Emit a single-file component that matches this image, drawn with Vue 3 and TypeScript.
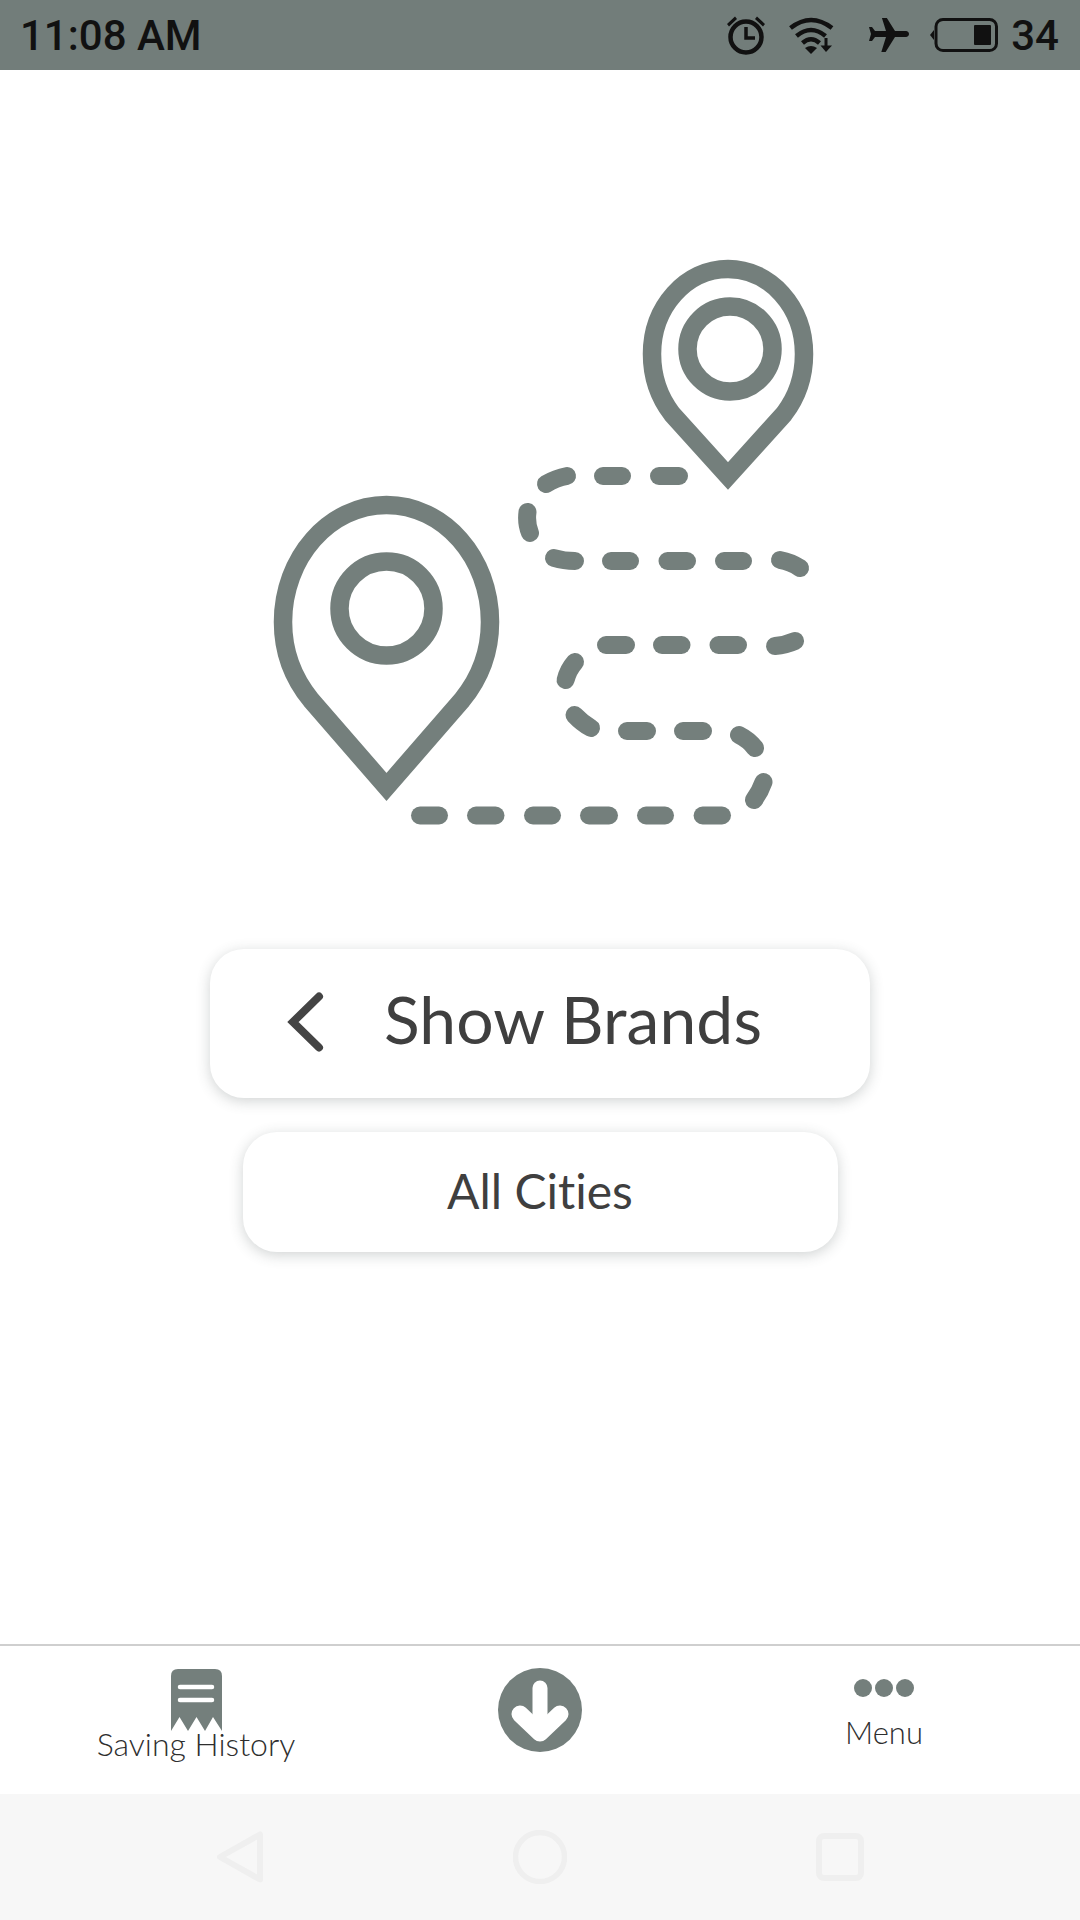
<script setup lang="ts">
const dashes: string[] = [
  'M603 476H622',
  'M659 476H679',
  'M546 484Q556 478 567 476',
  'M527.5 512Q526 523 530 533',
  'M554 558Q564 561 575 561',
  'M611 561H630',
  'M667.5 561H687',
  'M724 561H743',
  'M780 560Q791 562 800 568',
  'M606 645H626',
  'M662 645H681.5',
  'M718.5 645H738',
  'M775 646Q786 645 795 641',
  'M575 662Q568 670 565.6 680',
  'M574.5 715Q582 723 591 728',
  'M627 731H647',
  'M683 731H703',
  'M739 735Q749 740 755 748',
  'M763.5 782Q760 792 754 800',
  'M420 815.5H439',
  'M476 815.5H495.5',
  'M533 815.5H552',
  'M589 815.5H609',
  'M646 815.5H665',
  'M702.6 815.5H722',
]
</script>

<template>
  <div class="screen">
    <header class="status-bar">
      <span class="clock">11:08 AM</span>
      <div class="status-icons">
        <svg class="ic-alarm" width="40" height="40" viewBox="0 0 40 40">
          <circle cx="20" cy="22" r="15.500" fill="none" stroke="#111" stroke-width="4.500" />
          <path d="M20 12V23H29" fill="none" stroke="#111" stroke-width="3.500" />
          <path d="M1 9L9 1.500L11 4L3 11.500Z M39 9L31 1.500L29 4L37 11.500Z" fill="#111" />
        </svg>
        <svg class="ic-wifi" width="46" height="37" viewBox="0 0 46 37">
          <g fill="none" stroke="#111" stroke-width="4.500">
            <path d="M1.500 11Q22 -5 43 11" />
            <path d="M7.500 19Q22 7 36.500 19" />
            <path d="M13.500 26Q22 18.500 30.500 26" />
          </g>
          <path d="M16 31Q22 27 28 31L22 37Z" fill="#111" />
          <path d="M37 21V32" stroke="#111" stroke-width="3" />
          <path d="M31.500 28.500H43L37 35Z" fill="#111" />
        </svg>
        <svg class="ic-plane" width="40" height="34" viewBox="2 2 20 17" preserveAspectRatio="none">
          <path
            transform="rotate(90 12 10.500) translate(0 -1.500)"
            d="M21 16v-2l-8-5V3.500c0-.83-.67-1.500-1.500-1.500S10 2.670 10 3.500V9l-8 5v2l8-2.500V19l-2 1.500V22l3.500-1 3.500 1v-1.500L13 19v-5.500l8 2.500z"
            fill="#111"
          />
        </svg>
        <svg class="ic-batt" width="68" height="34" viewBox="0 0 68 34">
          <rect x="6" y="1.500" width="60.500" height="31" rx="7" fill="none" stroke="#111" stroke-width="3" />
          <path d="M4 12V22L0 17Z" fill="#111" />
          <rect x="44" y="7" width="17" height="20" rx="1" fill="#111" />
        </svg>
        <span class="level">34</span>
      </div>
    </header>

    <main class="content">
      <svg class="route" width="560" height="575" viewBox="260 255 560 575">
        <g fill="none" stroke="#747f7c" stroke-width="18.500">
          <path
            stroke-miterlimit="6"
            d="M386.500 787L311 700C293 678 283 652 283 622C283 558 329 505 386.500 505C444 505 490 558 490 622C490 652 480 678 462 700Z"
          />
          <circle cx="386.500" cy="608.500" r="47" />
          <path
            stroke-miterlimit="6"
            d="M728 476L672 414C659 397 652 376 652 354C652 307 686 269 728 269C770 269 804 307 804 354C804 376 797 397 784 414Z"
          />
          <circle cx="730" cy="349" r="42.500" />
        </g>
        <g fill="none" stroke="#747f7c" stroke-width="18" stroke-linecap="round">
          <path v-for="d in dashes" :key="d" :d="d" />
        </g>
      </svg>

      <button class="btn btn-brands" type="button">
        <svg class="chevron" width="40" height="64" viewBox="0 0 40 64">
          <path d="M33 4.500L7 30L33 55.500" fill="none" stroke="#444" stroke-width="8" stroke-linecap="round" stroke-linejoin="miter" />
        </svg>
        <span class="btn-text">Show Brands</span>
      </button>
      <button class="btn btn-cities" type="button"><span class="btn-text">All Cities</span></button>
    </main>

    <nav class="tabs">
      <div class="tab tab-history">
        <svg width="51" height="62" viewBox="0 0 51 62">
          <path d="M0 7Q0 0 7 0H44Q51 0 51 7V62L42 48L34 62L25.500 48L17 62L8.500 48L0 62Z" fill="#747f7c" />
          <path d="M9 18H41M9 31H41" stroke="#fff" stroke-width="4.500" stroke-linecap="round" />
        </svg>
        <span class="tab-label">Saving History</span>
      </div>
      <div class="tab tab-download">
        <svg width="84" height="84" viewBox="0 0 84 84">
          <circle cx="42" cy="42" r="42" fill="#747f7c" />
          <path d="M42 20V60" fill="none" stroke="#fff" stroke-width="15" stroke-linecap="round" />
          <path d="M22 46L42 65L62 46" fill="none" stroke="#fff" stroke-width="17" stroke-linecap="round" stroke-linejoin="round" />
        </svg>
      </div>
      <div class="tab tab-menu">
        <div class="dots"><i></i><i></i><i></i></div>
        <span class="tab-label">Menu</span>
      </div>
    </nav>

    <footer class="sys-nav">
      <svg width="46" height="52" viewBox="0 0 46 52">
        <path d="M43 3.500V48.500L3 26Z" fill="none" stroke="#efefef" stroke-width="6" stroke-linejoin="round" />
      </svg>
      <svg width="54" height="54" viewBox="0 0 54 54">
        <circle cx="27" cy="27" r="24.500" fill="none" stroke="#efefef" stroke-width="5.500" />
      </svg>
      <svg width="48" height="48" viewBox="0 0 48 48">
        <rect x="3" y="3" width="42" height="42" rx="5" fill="none" stroke="#efefef" stroke-width="6" />
      </svg>
    </footer>
  </div>
</template>

<style scoped>
.screen {
  width: 1080px;
  height: 1920px;
  display: flex;
  flex-direction: column;
  background: #fff;
  overflow: hidden;
  font-family: Lato, "Liberation Sans", sans-serif;
  font-variant-ligatures: none;
}

.status-bar {
  height: 70px;
  flex: none;
  display: flex;
  align-items: center;
  justify-content: space-between;
  padding: 0 21px 0 20px;
  background: #727d7a;
  color: #111;
  font-family: Roboto, sans-serif;
  font-weight: 500;
  font-size: 42px;
}

.status-icons {
  display: flex;
  align-items: center;
}

.ic-wifi {
  margin-left: 23px;
}

.ic-plane {
  margin-left: 34px;
}

.ic-batt {
  margin-left: 21px;
}

.level {
  margin-left: 13px;
}

.content {
  flex: 1;
  display: flex;
  flex-direction: column;
  align-items: center;
  padding-top: 185px;
}

.route {
  flex: none;
  display: block;
}

.btn {
  border: 0;
  background: #fff;
  color: #3f3f3f;
  font-family: inherit;
  font-variant-ligatures: none;
  padding: 0;
  display: flex;
  align-items: center;
  box-shadow: 0 3px 14px rgba(60, 70, 70, 0.24);
}

.btn-brands {
  width: 660px;
  height: 149px;
  margin-top: 119px;
  padding-left: 76px;
  border-radius: 34px;
  font-size: 66px;
}

.btn-brands .btn-text {
  position: relative;
  top: -5px;
  letter-spacing: 0.1px;
}

.chevron {
  margin-right: 58px;
}

.btn-cities {
  width: 595px;
  height: 120px;
  margin-top: 34px;
  justify-content: center;
  border-radius: 34px;
  font-size: 48px;
}

.btn-cities .btn-text {
  position: relative;
  top: -2px;
}

.tabs {
  height: 150px;
  flex: none;
  box-sizing: border-box;
  border-top: 2px solid #cfcfcf;
  display: grid;
  grid-template-columns: repeat(3, 344px);
  justify-content: center;
  background: #fff;
}

.tab {
  display: flex;
  flex-direction: column;
  align-items: center;
}

.tab-history {
  padding-top: 23px;
}

.tab-download {
  padding-top: 22px;
}

.tab-menu {
  padding-top: 33px;
}

.tab-label {
  color: #2e2e2e;
  font-size: 31px;
  line-height: 32px;
  font-weight: 300;
}

.tab-history .tab-label {
  margin-top: -3px;
  font-size: 32px;
}

.dots {
  display: flex;
  gap: 3px;
  margin-bottom: 19px;
}

.dots i {
  display: block;
  width: 18px;
  height: 18px;
  border-radius: 50%;
  background: #747f7c;
}

.sys-nav {
  height: 126px;
  flex: none;
  display: grid;
  grid-template-columns: 46px 54px 48px;
  justify-content: space-between;
  align-items: center;
  padding: 0 216px 0 217px;
  background: #f7f7f7;
}
</style>

<style>
html,
body {
  margin: 0;
}
</style>
